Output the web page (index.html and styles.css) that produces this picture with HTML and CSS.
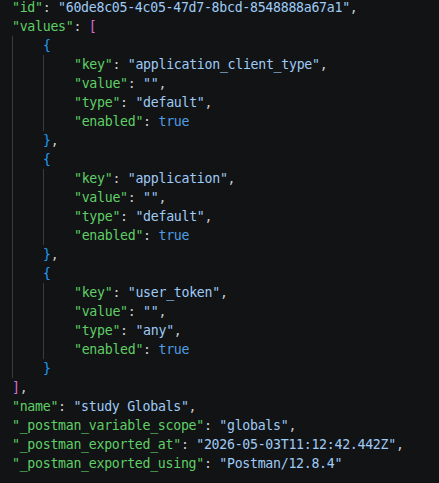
FILE: index.html
```html
<!DOCTYPE html>
<html>
<head>
<meta charset="utf-8">
<link rel="stylesheet" href="styles.css">
</head>
<body>
<div class="code">
  <div class="line"><span class="k">"id"</span><span class="p">: </span><span class="s">"60de8c05-4c05-47d7-8bcd-8548888a67a1"</span><span class="p">,</span></div>
  <div class="line"><span class="k">"values"</span><span class="p">: </span><span class="b2">[</span></div>
  <div class="indent">
    <div class="line"><span class="b3">{</span></div>
    <div class="indent">
      <div class="line"><span class="k">"key"</span><span class="p">: </span><span class="s">"application_client_type"</span><span class="p">,</span></div>
      <div class="line"><span class="k">"value"</span><span class="p">: </span><span class="s">""</span><span class="p">,</span></div>
      <div class="line"><span class="k">"type"</span><span class="p">: </span><span class="s">"default"</span><span class="p">,</span></div>
      <div class="line"><span class="k">"enabled"</span><span class="p">: </span><span class="t">true</span></div>
    </div>
    <div class="line"><span class="b3">}</span><span class="p">,</span></div>
    <div class="line"><span class="b3">{</span></div>
    <div class="indent">
      <div class="line"><span class="k">"key"</span><span class="p">: </span><span class="s">"application"</span><span class="p">,</span></div>
      <div class="line"><span class="k">"value"</span><span class="p">: </span><span class="s">""</span><span class="p">,</span></div>
      <div class="line"><span class="k">"type"</span><span class="p">: </span><span class="s">"default"</span><span class="p">,</span></div>
      <div class="line"><span class="k">"enabled"</span><span class="p">: </span><span class="t">true</span></div>
    </div>
    <div class="line"><span class="b3">}</span><span class="p">,</span></div>
    <div class="line"><span class="b3">{</span></div>
    <div class="indent">
      <div class="line"><span class="k">"key"</span><span class="p">: </span><span class="s">"user_token"</span><span class="p">,</span></div>
      <div class="line"><span class="k">"value"</span><span class="p">: </span><span class="s">""</span><span class="p">,</span></div>
      <div class="line"><span class="k">"type"</span><span class="p">: </span><span class="s">"any"</span><span class="p">,</span></div>
      <div class="line"><span class="k">"enabled"</span><span class="p">: </span><span class="t">true</span></div>
    </div>
    <div class="line"><span class="b3">}</span></div>
  </div>
  <div class="line"><span class="b2">]</span><span class="p">,</span></div>
  <div class="line"><span class="k">"name"</span><span class="p">: </span><span class="s">"study Globals"</span><span class="p">,</span></div>
  <div class="line"><span class="k">"_postman_variable_scope"</span><span class="p">: </span><span class="s">"globals"</span><span class="p">,</span></div>
  <div class="line"><span class="k">"_postman_exported_at"</span><span class="p">: </span><span class="s">"2026-05-03T11:12:42.442Z"</span><span class="p">,</span></div>
  <div class="line"><span class="k">"_postman_exported_using"</span><span class="p">: </span><span class="s">"Postman/12.8.4"</span></div>
</div>
</body>
</html>
```
FILE: styles.css
```css
html, body {
  margin: 0;
  padding: 0;
  background: #121315;
  height: 100%;
  overflow: hidden;
}
.code {
  font-family: "DejaVu Sans Mono", "Liberation Mono", monospace;
  font-size: 13.25px;
  letter-spacing: -0.3px;
  line-height: 19px;
  color: #cccccc;
  padding-left: 12px;
  margin-top: -2px;
}
.line {
  height: 19px;
  white-space: pre;
}
.indent {
  border-left: 1px solid #3c3c3c;
  padding-left: 30px;
}
.k { color: #5fcf65; }
.s { color: #9fcbf5; }
.t { color: #4f9de3; }
.p { color: #cccccc; }
.b2 { color: #d36ed3; }
.b3 { color: #1f9bf2; }
```
